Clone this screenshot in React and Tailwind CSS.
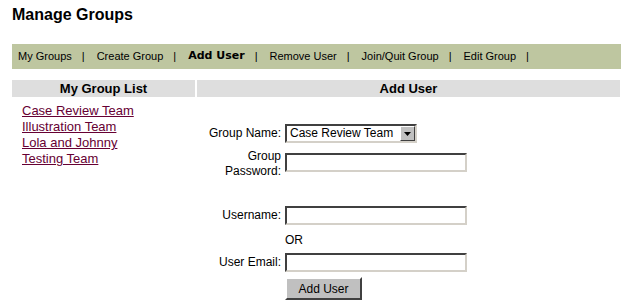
import React from "react";

const inset =
  "border-2 border-t-[#404040] border-l-[#404040] border-b-[#d4d0c8] border-r-[#d4d0c8] bg-white";

function Input() {
  return <div className={`${inset} w-[182px] h-[19px]`} />;
}

export default function App() {
  const links = ["Case Review Team", "Illustration Team", "Lola and Johnny", "Testing Team"];
  const nav = [
    ["My Groups", false],
    ["Create Group", false],
    ["Add User", true],
    ["Remove User", false],
    ["Join/Quit Group", false],
    ["Edit Group", false],
  ];
  return (
    <div
      className="w-[630px] h-[304px] bg-white text-black overflow-hidden"
      style={{ fontFamily: '"Liberation Sans", Arial, sans-serif' }}
    >
      <div className="pl-[12px] pr-[9px]">
        <h1 className="text-[16px] font-bold leading-[20px] pt-[5px] h-[44px]">Manage Groups</h1>
        <div className="h-[25px] bg-[#bec6a0] flex items-center pl-[6px] text-[11px]">
          {nav.map(([t, b]) => (
            <React.Fragment key={t}>
              <span
                className={b ? "font-bold" : ""}
                style={b ? { fontFamily: '"DejaVu Sans", Verdana, sans-serif', fontSize: "11px" } : undefined}
              >
                {t}
              </span>
              <span className="pl-[10px] pr-[12px]">|</span>
            </React.Fragment>
          ))}
        </div>
        <div className="mt-[11px] flex gap-[2px] w-[608px]">
          <div className="w-[183px]">
            <div className="h-[17px] bg-[#dedede] text-[13px] font-bold leading-[17px] text-center">My Group List</div>
            <div className="pl-[10px] pt-[6px] flex flex-col text-[13px] leading-[16px]">
              {links.map((l) => (
                <a key={l} href="#" className="text-[#660033] underline self-start">
                  {l}
                </a>
              ))}
            </div>
          </div>
          <div className="flex-1">
            <div className="h-[17px] bg-[#dedede] text-[13px] font-bold leading-[17px] text-center">Add User</div>
            <div className="text-[12px]">
              <div className="grid grid-cols-[84px_auto] gap-x-[4px] items-start">
                <div className="mt-[27px] h-[18px] leading-[18px] text-right">Group Name:</div>
                <div className={`${inset} mt-[27px] w-[132px] h-[19px] flex items-center pl-[3px] text-[12px]`}>
                  <span className="flex-1 leading-[15px] whitespace-nowrap">Case Review Team</span>
                  <span className="w-[15px] h-[15px] bg-[#c0c0c0] border border-t-white border-l-white border-b-[#404040] border-r-[#404040] flex items-center justify-center">
                    <svg width="7" height="4" viewBox="0 0 7 4">
                      <path d="M0 0h7L3.5 4z" fill="#000" />
                    </svg>
                  </span>
                </div>
                <div className="mt-[6px] text-right leading-[15px]">
                  Group
                  <br />
                  Password:
                </div>
                <div className="mt-[10px]">
                  <Input />
                </div>
                <div className="mt-[27px] h-[19px] leading-[19px] text-right">Username:</div>
                <div className="mt-[27px]">
                  <Input />
                </div>
                <div />
                <div className="h-[28px] leading-[28px] pt-[1px]">OR</div>
                <div className="h-[19px] leading-[19px] text-right">User Email:</div>
                <div>
                  <Input />
                </div>
                <div />
                <div className="mt-[5px]">
                  <button className="w-[77px] h-[23px] bg-[#c0c0c0] text-[12px] border-2 border-t-white border-l-white border-b-[#404040] border-r-[#404040]">
                    Add User
                  </button>
                </div>
              </div>
            </div>
          </div>
        </div>
      </div>
    </div>
  );
}
